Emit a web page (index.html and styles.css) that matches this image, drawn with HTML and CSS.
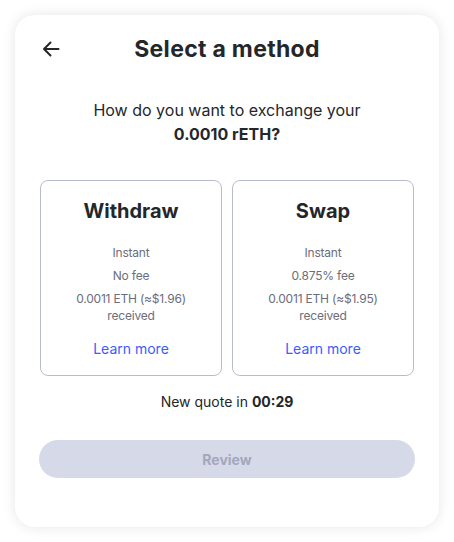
FILE: index.html
```html
<!DOCTYPE html>
<html lang="en">

<head>
    <meta charset="UTF-8">
    <meta name="viewport" content="width=device-width, initial-scale=1.0">
    <title>Select a method</title>
    <link rel="stylesheet" href="styles.css">
</head>

<body>
    <div class="modal">
        <div class="header">
            <span class="back">
                <svg width="18" height="16" viewBox="0 0 18 16" fill="none">
                    <path d="M16.5 8H2M8.5 1.5L2 8l6.5 6.5" stroke="#24272a" stroke-width="2" stroke-linecap="round"
                        stroke-linejoin="round" />
                </svg>
            </span>
            <h2>Select a method</h2>
        </div>

        <p class="question">How do you want to exchange your<br><b>0.0010 rETH?</b></p>

        <div class="options">
            <div class="option">
                <h3>Withdraw</h3>
                <ul>
                    <li>Instant</li>
                    <li>No fee</li>
                    <li>0.0011 ETH (≈$1.96)<br>received</li>
                </ul>
                <a href="#">Learn more</a>
            </div>
            <div class="option">
                <h3>Swap</h3>
                <ul>
                    <li>Instant</li>
                    <li>0.875% fee</li>
                    <li>0.0011 ETH (≈$1.95)<br>received</li>
                </ul>
                <a href="#">Learn more</a>
            </div>
        </div>

        <p class="quote">New quote in <b>00:29</b></p>

        <button class="review" disabled>Review</button>
    </div>
</body>

</html>
```

FILE: styles.css
```css
* {
    margin: 0;
    padding: 0;
    box-sizing: border-box;
    font-family: 'Inter', 'Noto Sans', sans-serif;
}

body {
    background: #fff;
    padding: 15px;
    color: #24272a;
}

.modal {
    width: 424px;
    height: 512px;
    background: #fff;
    border-radius: 20px;
    box-shadow: 0 0 14px rgba(0, 0, 0, 0.1);
    padding: 14px 24px;
    display: flex;
    flex-direction: column;
    align-items: center;
}

.header {
    position: relative;
    width: 100%;
    height: 40px;
    display: flex;
    justify-content: center;
    align-items: center;
}

.header .back {
    position: absolute;
    left: 3px;
    top: 12px;
    display: flex;
}

.header h2 {
    font-size: 23px;
    font-weight: 700;
    letter-spacing: 0.3px;
}

.question {
    margin-top: 29px;
    font-size: 16px;
    line-height: 24px;
    text-align: center;
}

.options {
    margin-top: 34px;
    display: grid;
    grid-template-columns: 1fr 1fr;
    gap: 10px;
    width: 100%;
    padding: 0 1px;
}

.option {
    border: 1px solid #b9bccb;
    border-radius: 8px;
    padding: 16px 8px 16px;
    text-align: center;
}

.option h3 {
    font-size: 20px;
    line-height: 28px;
    font-weight: 700;
}

.option ul {
    list-style: none;
    margin-top: 19px;
    display: flex;
    flex-direction: column;
    gap: 6px;
}

.option li {
    font-size: 12px;
    line-height: 17px;
    color: #6a6d7c;
    letter-spacing: -0.2px;
}

.option a {
    display: block;
    margin-top: 15px;
    font-size: 14px;
    line-height: 20px;
    color: #3d5bff;
    text-decoration: none;
}

.quote {
    margin-top: 16px;
    font-size: 14px;
    line-height: 20px;
}

.review {
    margin-top: 28px;
    width: 100%;
    height: 38px;
    border: none;
    border-radius: 19px;
    background: #d6d9e8;
    color: #a3a7bd;
    font-size: 14px;
    font-weight: 700;
}
```
